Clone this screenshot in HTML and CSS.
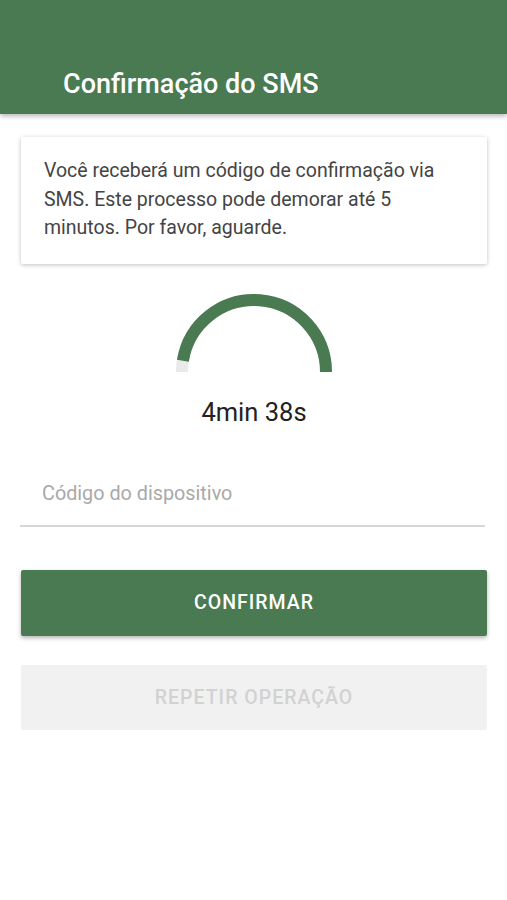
FILE: index.html
```html
<!DOCTYPE html>
<html lang="pt-BR">
<head>
    <meta charset="UTF-8">
    <meta name="viewport" content="width=device-width, initial-scale=1.0">
    <title>Confirmação do SMS</title>
    <link rel="stylesheet" href="styles.css">
</head>
<body>
    <header class="app-bar">
        <h1>Confirmação do SMS</h1>
    </header>

    <main class="content">
        <div class="info-card">
            <p>Você receberá um código de confirmação via SMS. Este processo pode demorar até 5 minutos. Por favor, aguarde.</p>
        </div>

        <div class="timer">
            <svg class="gauge" width="168" height="86" viewBox="0 0 168 86">
                <path class="gauge-track" d="M12 84 A72 72 0 0 1 156 84" />
                <path class="gauge-fill" d="M12.9 72.7 A72 72 0 0 1 156 84" />
            </svg>
            <div class="timer-label">4min 38s</div>
        </div>

        <div class="field">
            <input type="text" placeholder="Código do dispositivo">
        </div>

        <button class="btn btn-primary">Confirmar</button>
        <button class="btn btn-disabled" disabled>Repetir operação</button>
    </main>
</body>
</html>
```

FILE: styles.css
```css
body {
    margin: 0;
    font-family: Roboto, "Noto Sans", sans-serif;
    background-color: #fff;
    color: #444;
}
.app-bar {
    height: 114px;
    background-color: #4a7a51;
    box-shadow: 0 2px 5px rgba(0, 0, 0, 0.3);
    display: flex;
    align-items: flex-end;
    padding: 0 0 14px 63px;
    box-sizing: border-box;
}
.app-bar h1 {
    margin: 0;
    color: #fff;
    font-size: 27px;
    font-weight: 500;
    line-height: 32px;
}
.content {
    padding: 23px 20px 0 21px;
    display: flex;
    flex-direction: column;
}
.info-card {
    background-color: #fff;
    box-shadow: 0 1px 4px rgba(0, 0, 0, 0.25);
    border-radius: 2px;
    padding: 20px 23px 21px;
}
.info-card p {
    margin: 0;
    font-size: 19.5px;
    line-height: 28.5px;
    color: #444;
}
.timer {
    display: flex;
    flex-direction: column;
    align-items: center;
    margin-top: 24px;
}
.gauge {
    display: block;
}
.gauge-track, .gauge-fill {
    fill: none;
    stroke-width: 12;
}
.gauge-track {
    stroke: #eaeaea;
}
.gauge-fill {
    stroke: #4a7a51;
}
.timer-label {
    margin-top: 23px;
    font-size: 25.5px;
    line-height: 30px;
    color: #222;
}
.field {
    margin-top: 38px;
    border-bottom: 2px solid #d6d6d6;
    margin-right: 2px;
    margin-left: -1px;
}
.field input {
    width: 100%;
    box-sizing: border-box;
    border: none;
    outline: none;
    font-family: inherit;
    font-size: 19.8px;
    line-height: 23px;
    padding: 17px 22px 20px;
    color: #333;
    background: transparent;
}
.field input::placeholder {
    color: #a9a9a9;
}
.btn {
    height: 66px;
    border: none;
    border-radius: 2px;
    font-family: inherit;
    font-size: 19.5px;
    font-weight: 500;
    letter-spacing: 1px;
    text-transform: uppercase;
}
.btn-primary {
    margin-top: 43px;
    background-color: #4a7a51;
    color: #fff;
    box-shadow: 0 2px 4px rgba(0, 0, 0, 0.3);
}
.btn-disabled {
    margin-top: 29px;
    height: 65px;
    background-color: #f1f1f1;
    color: #d2d2d2;
}
```
